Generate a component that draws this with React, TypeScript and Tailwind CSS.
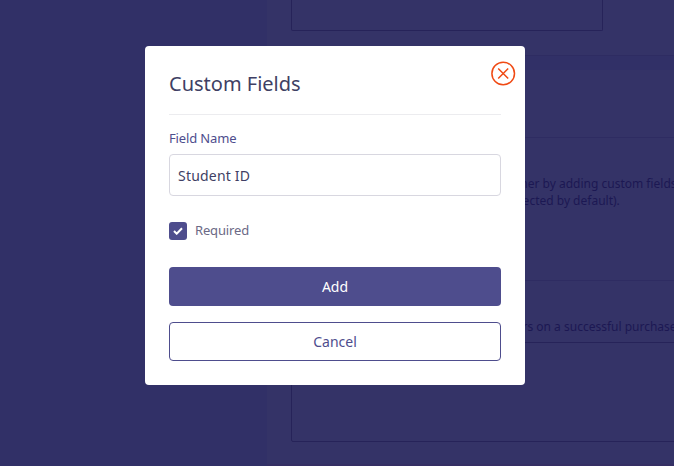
import React from 'react'

const Background: React.FC = () => {
  return (
    <div className="flex h-full">
      <div className="w-[267px] shrink-0 bg-[#313067]" />
      <div className="flex flex-1 flex-col overflow-hidden bg-[#343367] text-[12px] leading-[17px] text-[#1c1853]">
        <div className="h-[56px] shrink-0 border-b border-[#2e2c62] pl-6">
          <div className="h-[31px] w-[312px] rounded-b-[2px] border border-t-0 border-[#262359]" />
        </div>
        <div className="h-[14px] shrink-0 bg-[#313067]" />
        <div className="h-[68px] shrink-0 border-b border-[#2e2c62]" />
        <div className="h-[143px] shrink-0 border-b border-[#2e2c62] pt-[37px] whitespace-nowrap">
          <p className="pl-[219px]">customer by adding custom fields</p>
          <p className="pl-[240px]">selected by default).</p>
        </div>
        <div className="shrink-0 pt-[37px] pl-6">
          <p className="pl-[183px] whitespace-nowrap">customers on a successful purchase</p>
          <div className="mt-[7px] h-[100px] w-[420px] rounded-[2px] border border-[#262359]" />
        </div>
        <div className="mt-auto h-[2px] shrink-0 bg-[#352f64]" />
      </div>
    </div>
  );
};

const Modal: React.FC = () => {
  const [name, setName] = React.useState('Student ID');
  const [required, setRequired] = React.useState(true);

  return (
    <div className="h-[339px] w-[380px] rounded-[4px] bg-white px-6">
      <div className="flex h-[69px] items-start justify-between border-b border-[#ececef]">
        <h1 className="pt-[23px] text-[20px] leading-[30px] text-[#403f64]">Custom Fields</h1>
        <button aria-label="Close" className="mt-[15px] -mr-[15px]">
          <svg width="26" height="26" viewBox="0 0 26 26" fill="none" stroke="#f04a14" strokeWidth="1.5">
            <circle cx="13.2" cy="12.5" r="11.3" />
            <path d="M8.2 7.5l10 10M18.2 7.5l-10 10" />
          </svg>
        </button>
      </div>

      <label className="block pt-[14px] text-[13px] leading-[19px] tracking-[-0.15px] text-[#4e4d8d]">Field Name</label>
      <input
        type="text"
        value={name}
        onChange={(e) => setName(e.target.value)}
        className="mt-[6px] block h-[42px] w-full rounded-[4px] border border-[#d8d7e0] px-2 text-[14px] tracking-[0.2px] text-[#403f64] outline-none"
      />

      <label className="mt-[25px] flex h-5 items-center">
        <input type="checkbox" className="sr-only" checked={required} onChange={() => setRequired(!required)} />
        <span className="flex size-[18px] items-center justify-center rounded-[3px] bg-[#4e4d8d]">
          {required && (
            <svg width="10" height="8" viewBox="0 0 10 8" fill="none" stroke="white" strokeWidth="2">
              <path d="M1 4l2.7 2.7L9 1.2" />
            </svg>
          )}
        </span>
        <span className="ml-2 text-[13px] tracking-[-0.15px] text-[#6b6985]">Required</span>
      </label>

      <button className="mt-[26px] block h-[39px] w-full rounded-[4px] bg-[#4e4d8d] text-[14px] text-white">Add</button>
      <button className="mt-4 block h-[39px] w-full rounded-[4px] border border-[#4e4d8d] text-[14px] text-[#4e4d8d]">
        Cancel
      </button>
    </div>
  );
};

const App: React.FC = () => {
  return (
    <div className="relative h-[466px] w-[674px] overflow-hidden font-['Noto_Sans',sans-serif]">
      <Background />
      <div className="absolute inset-0 flex items-start justify-center pt-[46px] pr-1">
        <Modal />
      </div>
    </div>
  );
};

export default App;
